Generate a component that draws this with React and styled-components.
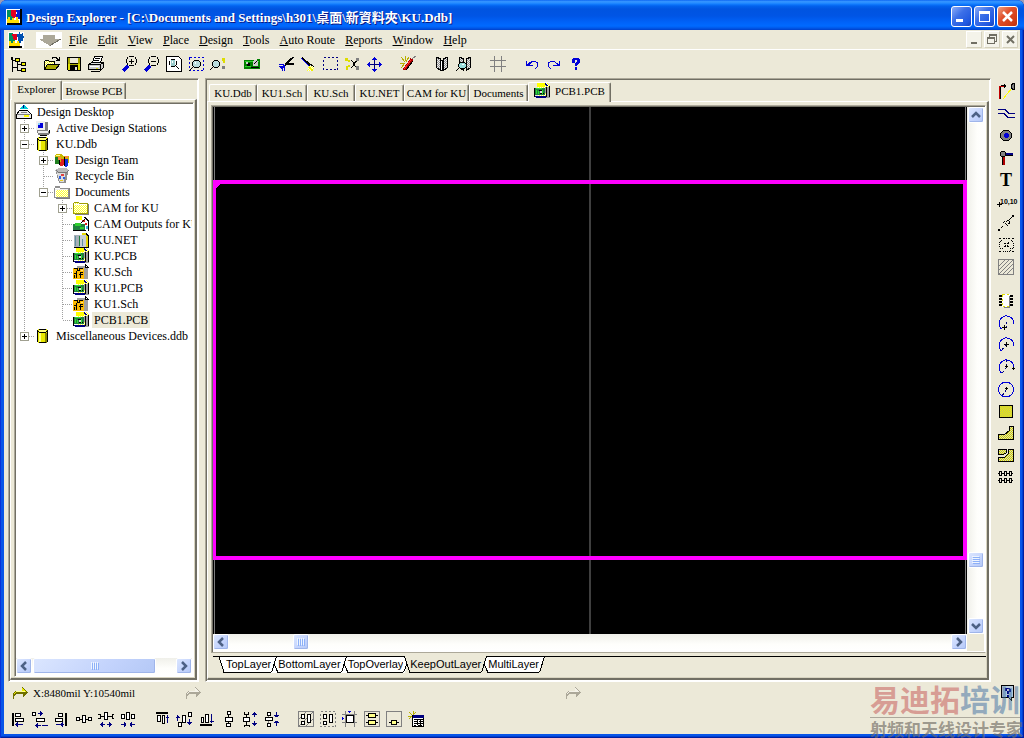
import React from 'react';
import styled, { createGlobalStyle, css } from 'styled-components';

const FACE = '#ece9d8';
const SERIF = '"Liberation Serif", "Noto Sans CJK TC", serif';
const SANS = '"Liberation Sans", "Noto Sans CJK TC", sans-serif';

const Global = createGlobalStyle`
  * { box-sizing: border-box; }
  body { margin: 0; background: #9c9cb4; font: 12px ${SERIF}; color: #000; }
  button { font: inherit; color: inherit; padding: 0; margin: 0; border: 0; background: none; }
  ul { list-style: none; margin: 0; padding: 0; }
`;

/* ---------- icon drawings: [kind, colour, path]
   s = stroke, w = wide stroke, d = dashed, e = dotted, a = smooth arc, f = fill, o = outlined fill ---------- */
const DY = 'url(#ditherYellow)';
const DO = 'url(#ditherOlive)';
const DP = 'url(#ditherPale)';
const DG = 'url(#ditherGray)';
const N = '#000080';
const B = '#0000d8';
const K = '#000';
const G = '#808080';

const pcb = [
  ['f', DY, 'M4 0h9l3 3v12H4z'], ['f', '#ff0', 'M3 0h8v4H3z'], ['f', '#a0a0a0', 'M11 4h5v11h-4z'], ['s', K, 'M12.5 4v10M15.5 3v11'],
  ['f', '#208040', 'M1 5h10v7H1z'], ['f', K, 'M0 5h1v9H0zM5 7h3v1H5zM6 10h4v1H6z'], ['f', '#30e030', 'M2 5h6v1H2zM2 7h1v4H2zM4 8h1v3H4zM8 7h1v4H8z'],
  ['f', N, 'M1 13h11v2H2zM11 0h1v1h1v1h1v1h-2z'], ['f', '#ddd', 'M6 8h2v2H6z'],
];
const sch = [
  ['f', '#a0a0a0', 'M4 2h9l2 2v11H4z'], ['o', '#fff', 'M12.5 .5l3 3h-3z'], ['f', '#fb0', 'M0 4h11v11H0z'],
  ['s', K, 'M1 4.5h3v2h2v-2h4M3.5 7v7M1 9.5h3M7.5 14V8.500h2M6 10.500h4M1.500 11v3'], ['f', '#ffe080', 'M8 6h2v1H8z'],
];
const folder = [
  ['f', G, 'M2 4h14v11H2z'], ['f', '#a0a000', 'M0 3h1V2h5v1h9v11H0z'], ['f', DY, 'M1 3h5v1h8v9H1z'], ['s', '#fff', 'M1 4.500h13'],
];
const barrel = [
  ['f', '#e8e800', 'M2 2l2-1h7l2 1v12l-2 1H4l-2-1z'], ['f', '#888800', 'M10 5h3v8l-2 2h-1z'], ['f', '#ffff80', 'M4 2h7v2H4zM4 5h2v9H4z'],
  ['s', K, 'M4 1.500h7M2.500 2v12M12.500 2v12M4 4.500h7M4 14.500h7M3 3.500h1M11 3.500h1'],
];
const logo = [
  ['f', '#fff', 'M0 0h16v16H0z'], ['f', K, 'M14 0h2v16H1v-2h13z'], ['f', '#009060', 'M1 1h4v5l2 2v3H1z'], ['f', '#e00020', 'M5 1h5v6l-1 2H7L5 6z'],
  ['f', '#0020d0', 'M10 1h4v9h-4V7l1-3z'], ['f', '#ffe000', 'M1 10h1V8h2v3h2V9h2v2h2V8h2v3h1v3H1z'],
];
const ARC = 'M4.500 15A7.500 7.500 0 1 1 17 10';

const ICONS = {
  logo,
  logo2: [...logo.slice(0, 1), ['f', '#009060', 'M1 1h4v5l2 2v3H1z'], ['f', '#e00020', 'M4 2h5v6H6z'], ['f', '#0050b0', 'M9 2h2V0h1v2h2V1h1v3h1v2h-1v3h-2v2h-3V7z'], ['f', '#ffe000', 'M1 9h2v2h2V9h2v2h2V9h2v2h1v3H1z'], ['f', K, 'M1 14h13v2H1z']],
  tree: [['s', K, 'M2.500 1v15M2 4.500h3M2 11.500h5M7.500 5v10M7 8.500h4M7 14.500h4'], ['o', '#ee0', 'M5.500 2.500h4v3h-4zM11.500 6.500h4v3h-4zM11.500 12.500h4v3h-4z'], ['s', K, 'M1.500 1v3']],
  open: [['o', DY, 'M.500 13.500V5.500l1-1h3l1 1h5v3'], ['o', '#a8a800', 'M.500 13.500l3-5h12l-4 5z'], ['s', K, 'M8 2.500l1-1h3l3 3M15.500 1v4M12 4.500h3']],
  save: [['f', K, 'M1 1h14v14H2l-1-1z'], ['f', '#a8a800', 'M2 2h2v6h8V2h2v12H2z'], ['f', FACE, 'M4 2h8v5H4z'], ['f', K, 'M4 9h8v6H4z'], ['f', '#ddd', 'M9 11h2v3H9z'], ['f', '#dd0', 'M2 8h2v6H2zM12 8h2v6h-2z']],
  print: [['o', '#fff', 'M4.500 6.500l2-6h8l-2 6z'], ['s', K, 'M7 2.500h5M6 4.500h5'], ['o', '#ddd', 'M.500 8.500l3-2h12l-3 3H1z'], ['o', '#ccc', 'M.500 8.500h12v5H.500zM12.500 8.500l3-2v5l-3 3z'], ['s', K, 'M3 15.500h9'], ['s', '#fff', 'M2 10.500h9'], ['f', '#dd0', 'M8 12h2v1H8z']],
  zoomin: [['s', K, 'M7 .500h5M7 9.500h5M4.500 3v4M14.500 3v4M5.500 1v2M13.500 1v2M5.500 7v2M13.500 7v2M7 5.500h5M9.500 3v5'], ['w', B, 'M6 10l-5 5']],
  zoomout: [['s', K, 'M7 .500h5M7 9.500h5M4.500 3v4M14.500 3v4M5.500 1v2M13.500 1v2M5.500 7v2M13.500 7v2M7 5.500h5'], ['w', B, 'M6 10l-5 5']],
  zoompage: [['o', '#fff', 'M.500 .500h12l3 3v12h-15z'], ['s', K, 'M5 3.500h4M3.500 5v4M10.500 5v4M5 10.500h4M9.500 9.500l4 4'], ['f', '#9cc', 'M5 4h4v6H5z'], ['s', '#fff', 'M6.500 5v2']],
  zoomarea: [['d', B, 'M1.500 1.500h14v13h-14z'], ['o', '#bdd', 'M6.500 4.500h4l2 2v3l-2 2h-4l-2-2v-3z'], ['s', K, 'M5 11l-4 4'], ['s', '#fff', 'M7.500 6v2']],
  zoompoint: [['o', '#bdd', 'M4.500 4.500h3l2 2v3l-2 2h-3l-2-2v-3z'], ['s', K, 'M3 11l-3 3'], ['f', '#dd0', 'M12 2h3v3h-3zM13 5h2v2h-2z'], ['f', G, 'M12 10h3v3h-3z']],
  board: [['f', '#008000', 'M0 4h13V3h3v10H0z'], ['f', '#30d030', 'M1 5h14v1H1zM1 10h6v1H1z'], ['f', K, 'M3 7h3v3H3zM7 11h8v1H7z'], ['f', '#ccc', 'M2 6h2v2H2zM10 4h3l1 2v4h-5V6z'], ['s', K, 'M10 8l3-3']],
  cut: [['v', K, 'M15.500 1L7 9M16 8H7'], ['s', B, 'M1 8.500h4l2 2M1 10.500h4M6.500 10v5M4.500 11v4M2 12l5-3M3 13l4-3']],
  brush: [['v', K, 'M2 2l8 7'], ['s', '#0000ff', 'M1 2l9 9'], ['s', K, 'M10 8l4 3'], ['f', DY, 'M9 10h3l2 2-1 3H7z'], ['f', '#ee0', 'M9 11h2v2H9zM11 13h2v2h-2z']],
  select: [['d', N, 'M1.500 1.500h14v12h-14z']],
  deselect: [['f', '#dd0', 'M1 2h3v3H1zM4 4h2v2H4zM2 10h2v4H2zM4 9h2v2H4z'], ['s', K, 'M7 4l4 4-4 4M13 5l-4 3 4 4'], ['f', G, 'M12 2h3v3h-3zM12 10h3v4h-3z']],
  move: [['s', N, 'M8.500 1v14M2 8.500h13'], ['f', B, 'M8 1h1l2 3H6zM8 16h1l2-3H6zM1 8v1l3 2V6zM16 8v1l-3 2V6z']],
  wand: [['s', '#b8b000', 'M1 1l4 5M5.500 0v5M0 7.500h5M1 12l4-5M9 1L6 6'], ['w', '#b00000', 'M12 3L4 14'], ['s', '#ff3030', 'M11 4l-7 9'], ['s', G, 'M12 3l4-3'], ['s', K, 'M13 5L6 14']],
  lib: [['o', DG, 'M2.500 1.500l4 1v12l-4-3zM13.500 1.500l-4 1v12l4-3z'], ['o', '#fff', 'M6.500 4.500h3v10h-3z'], ['s', K, 'M8.500 5v9']],
  libfind: [['o', DG, 'M3.500 1.500l4 1v12l-4-3zM14.500 1.500l-4 1v12l4-3z'], ['o', '#9dd', 'M4.500 6.500h4l2 2v2l-2 2h-4l-2-2v-2z'], ['s', K, 'M3 12l-3 3'], ['s', '#fff', 'M6 8.500h2']],
  grid: [['s', G, 'M4.500 0v16M11.500 0v16M0 4.500h16M0 10.500h16']],
  undo: [['f', B, 'M2 5h1v3l5-3h2v1H8L5 9h4v1H2z'], ['s', B, 'M9 5.500h3M12 6.500h2M13.500 7v4M12 11.500h1M11 12.500h1']],
  redo: [['f', B, 'M14 5h-1v3L8 5H6v1h2l3 3H7v1h7z'], ['s', B, 'M7 5.500H4M4 6.500H2M2.500 7v4M4 11.500H3M5 12.500H4']],
  help: [['f', B, 'M4 3h1V2h6v1h1v4h-1v1h-1v1H9v1H7V7h1V6h1V4H7v3H4zM7 11h2v3H7z']],
  desktop: [['f', '#00c8d8', 'M8 0l4 5H4z'], ['s', N, 'M7.500 1v3'], ['o', '#eee', 'M3.500 6.500h8l4 4v4H.500v-4z'], ['s', G, 'M1 10.500h13'], ['f', '#ff0', 'M8 11h5v2H8z'], ['s', G, 'M5 8.500h6']],
  station: [['f', G, 'M3 2h10v9H3zM2 11h12l1 3-3 1H3z'], ['f', '#eee', 'M1 1h9v9H1zM3 11h10v2H3z'], ['f', B, 'M3 3h5v5H3z'], ['f', '#8cf', 'M3 3h2v2H3z'], ['s', G, 'M11.500 2v8M2 10.500h8'], ['s', K, 'M5 15.500h7M14.500 10v3']],
  barrel,
  team: [['f', '#c8b800', 'M1 3l2-1h4l2 2h6v7H1z'], ['f', '#ffff90', 'M2 3h4v1H2z'], ['f', '#208020', 'M1 5h4v7H1z'], ['f', K, 'M5 5h1v8H5zM10 5h1v9h-1z'], ['f', '#e02020', 'M7 7h3v5l-2 2H6z'], ['f', '#1030e0', 'M11 7h3v6l-2 2h-1z'], ['f', '#ff8040', 'M4 5h3v3H4zM11 4h3v2h-3z']],
  bin: [['f', '#909090', 'M2 4h12l-2 11H5z'], ['f', '#ddd', 'M3 5h8l-1 9H6z'], ['f', '#bbb', 'M1 2l4-2h7l3 2-2 3H3z'], ['s', '#777', 'M2 2.500l3 2h7l3-2'], ['f', '#3060e0', 'M5 8h2v3H5zM9 9h2v2H9z'], ['f', '#e04040', 'M7 6h3v2H7z'], ['f', '#e8c820', 'M6 12h3v1H6z']],
  folder,
  folderopen: [['f', G, 'M2 4h14v11H2z'], ['f', '#909090', 'M0 4h1V2h5v2h9v10H0z'], ['f', '#fff', 'M1 4h5v1h8v8H1z'], ['f', DY, 'M2 5h12v8H2z'], ['s', '#eee', 'M1 5.500h13']],
  cam: [['f', '#fff', 'M4 1h8l3 3v11H4z'], ['f', '#ff0', 'M3 0h6v4H3z'], ['f', '#208040', 'M0 8h12v6H0z'], ['f', '#30d030', 'M2 7h6v3H2zM7 11h4v2H7z'], ['f', '#e02020', 'M9 4h3v2H9zM12 7h2v2h-2z'], ['s', K, 'M0 14.500h13M11.500 1l4 4v10M8 7l5-5'], ['f', '#40b0e0', 'M13 10h2v3h-2z']],
  net: [['f', '#e8d800', 'M9 1h4l3 3v11H9z'], ['f', '#a8b0b8', 'M1 3h6v12H1z'], ['f', '#c8ced2', 'M7 3h6v12H7z'], ['s', K, 'M13 1.500l2 2v12M1 15.500h14'], ['s', '#6090a0', 'M2.500 4v10M9.500 7v7'], ['s', '#208040', 'M6.500 4v10']],
  pcb,
  sch,
  arrowOn: [['f', '#707000', 'M0 14V8l2-2h7V2l6 5-5 5V9H4l-3 2v3z'], ['f', '#ee0', 'M1 8l2-2h6V3l5 4H3L1 10z'], ['s', '#ffff90', 'M3 6.500h9']],
  arrowOff: [['f', '#aca899', 'M0 14V8l2-2h7V2l6 5-5 5V9H4l-3 2v3z'], ['f', '#f4f2e8', 'M1 8l2-2h6V3l5 4H3L1 10z']],
  aLeft: [['s', K, 'M2.500 2v13M3.500 2v13'], ['o', '#fff', 'M5.500 2.500h5v3h-5zM5.500 7.500h8v3h-8z'], ['s', N, 'M5 13.500h8M7.500 11v5M6.500 12v3']],
  aHc: [['o', '#fff', 'M.500 1.500h3v3h-3zM4.500 7.500h8v3h-8z'], ['s', N, 'M6 2.500h5M8.500 0v5M9.500 1v3M10 14.500h6M4 14.500h5M3.500 14v1M4.500 13v3M5.500 12v5']],
  aRight: [['s', K, 'M12.500 2v13M11.500 2v13'], ['o', '#fff', 'M4.500 2.500h4v3h-4zM1.500 7.500h7v3h-7z'], ['s', N, 'M2 13.500h8M8.500 11v5M7.500 12v3']],
  dH: [['s', K, 'M4 8.500h2M10 8.500h2'], ['o', '#fff', 'M.500 6.500h3v3h-3zM6.500 4.500h3v7h-3zM12.500 6.500h3v3h-3z']],
  dHi: [['s', K, 'M0 3.500h2v4H0M2 5.500h4M10 5.500h4M16 3.500h-2v4h2'], ['o', '#fff', 'M6.500 1.500h3v7h-3z'], ['s', N, 'M2 13.500h5M9 13.500h5M3.500 12v3M4.500 11v5M12.500 12v3M11.500 11v5']],
  dHd: [['o', '#fff', 'M1.500 3.500h3v4h-3zM6.500 1.500h3v7h-3zM11.500 3.500h3v4h-3z'], ['s', N, 'M1 13.500h5M10 13.500h5M4.500 11v5M5.500 12v3M11.500 11v5M10.500 12v3']],
  aTop: [['s', K, 'M2 1.500h12M2 2.500h12'], ['o', '#fff', 'M3.500 4.500h3v6h-3zM8.500 4.500h2v8h-2z'], ['s', N, 'M13.500 4v8M12 6.500h3']],
  aVc: [['o', '#fff', 'M6.500 4.500h3v7h-3zM2.500 11.500h3v4h-3zM12.500 1.500h3v4h-3z'], ['s', N, 'M1.500 4v6M0 6.500h4M1 5.500h2M13.500 8v6M11 11.500h5M12 12.500h3']],
  aBot: [['s', K, 'M2 13.500h12M2 14.500h12'], ['o', '#fff', 'M3.500 6.500h2v5h-2zM7.500 3.500h3v8h-3z'], ['s', N, 'M13.500 3v9M12 10.500h4']],
  dV: [['s', K, 'M8.500 4v9'], ['o', '#fff', 'M7.500 .500h3v3h-3zM5.500 6.500h7v4h-7zM6.500 12.500h4v3h-4z']],
  dVi: [['s', K, 'M2 1v2h4V1M4.500 3v4M4.500 10v4M2 16v-2h5v2'], ['o', '#fff', 'M1.500 6.500h6v4h-6z'], ['s', N, 'M12.500 1v5M12.500 10v5M10 3.500h5M11 2.500h3M10 12.500h5M11 13.500h3']],
  dVd: [['s', G, 'M4.500 4v9'], ['o', '#fff', 'M3.500 1.500h3v3h-3zM1.500 6.500h7v3h-7zM3.500 12.500h3v3h-3z'], ['s', N, 'M12.500 1v5M12.500 10v5M10 4.500h5M11 5.500h3M10 11.500h5M11 10.500h3']],
  g1: [['s', G, 'M.500 .500h15v15h-15zM1 8l7-7M1 15L15 1M8 15l7-7'], ['o', '#fff', 'M3.500 3.500h3v4h-3zM3.500 10.500h3v3h-3zM9.500 3.500h3v8h-3z']],
  g2: [['d', G, 'M.500 .500h15v15h-15z'], ['o', '#fff', 'M3.500 3.500h3v4h-3zM3.500 10.500h3v3h-3zM9.500 3.500h3v8h-3z']],
  g3: [['s', G, 'M3.500 0v16M12.500 0v16M0 3.500h15M0 11.500h15'], ['o', '#fff', 'M4.500 4.500h7v7h-7z'], ['f', B, 'M6 0h3v1H8v1H7V1H6zM0 6h1v1h1v1H1v1H0z']],
  g4: [['o', FACE, 'M.500 .500h15v15h-15z', G], ['s', K, 'M2 4.500h12M2 11.500h12'], ['o', '#ff8', 'M4.500 2.500h7v4h-7zM4.500 9.500h7v4h-7z']],
  g5: [['s', G, 'M.500 .500h15v15h-15z'], ['s', K, 'M3 11.500h10'], ['o', '#ff8', 'M5.500 9.500h5v4h-5z']],
  g6: [['s', '#b8b000', 'M1 1l6 6M5.500 0v5M0 5.500h5M8 1L1 8'], ['o', '#fff', 'M4.500 4.500h11v11h-11z'], ['f', N, 'M5 4h11v3H5z'], ['s', K, 'M6 8.500h9M6 10.500h3M11 10.500h4M6 12.500h9M6 14.500h2M10 14.500h4M9.500 8v6M12.500 8v6']],
  note: [['o', '#bcd', 'M1.500 .500h12v12h-2v3l-3-3h-7z'], ['f', N, 'M5 3h5v1h1v3H9v2H7V6h2V4H7v2H5zM7 10h2v2H7z']],
};

const RIGHT = [
  [['s', K, 'M3.500 4v13M4 3.500h3M7.500 2v4M8.500 3v2'], ['s', '#c00000', 'M2.500 4v13M3 4.500h4'], ['s', '#ff0', 'M6 17L15 6'], ['o', G, 'M17.500 1.500h-2l-1 2v2l1 2h2z']],
  [['s', N, 'M1 5.500h7l4 4h6M1 9.500h6l4 4h7']],
  [['o', G, 'M6.500 4.500h5l3 3v4l-3 3h-5l-3-3v-4z'], ['f', B, 'M8 7h3v1h1v3h-1v1H8v-1H7V8h1z']],
  [['f', N, 'M8 5h8v2H8z'], ['s', K, 'M8 7.500h8M5.500 8v9'], ['f', '#b00000', 'M6 9h2v8H6z'], ['o', G, 'M4.500 3.500h3l1 1v3l-1 1h-3l-1-1v-3z']],
  'T', '10',
  [['s', K, 'M2 15.500h1M4 13.500h1M5 12.500h1M13 4.500h1M12 5.500h1M14 3.500h1M7.500 7v1M6 8.500h1M8 9.500h1M9 10.500h1M10 11.500h1M10 6.500h2M9.500 7v1M12.500 7v2M11 9.500h2'], ['f', K, 'M1 15h2v2H1zM15 1h2v2h-2z']],
  [['e', K, 'M6.500 2.500h6l4 4v5l-4 4h-6l-4-4v-5z'], ['s', K, 'M2 2.500h2M15 2.500h2M2 15.500h2M15 15.500h2'], ['d', K, 'M4 4l11 10M15 4L4 14']],
  [['s', G, 'M1.500 1.500h15v15h-15zM2 8l6-6M2 12L12 2M2 16L16 2M6 16l10-10M10 16l6-6']],
  null,
  [['f', K, 'M2 3h3v2H2zM2 6h3v2H2zM2 9h3v2H2zM2 12h3v2H2zM13 3h3v2h-3zM13 6h3v2h-3zM13 9h3v2h-3zM13 12h3v2h-3z'], ['f', '#fff', 'M5 2h8v13H5z'], ['d', '#e0e000', 'M5.500 2.500h7v12h-7z'], ['s', G, 'M7 15.500h6M12.500 4v11']],
  [['s', B, ARC], ['d', N, 'M9.500 8v5'], ['s', K, 'M5 13.500h5M7.500 11v5']],
  [['s', B, ARC], ['d', N, 'M9 9l-5 6'], ['s', K, 'M7 8.500h5M9.500 6v5']],
  [['s', B, ARC], ['d', N, 'M9.500 2v7l-5 7'], ['s', K, 'M8 8.500h3M9.500 7v3M15 10.500h3M16.500 9v3']],
  [['s', B, 'M1.500 9.500a7.500 7.500 0 1 0 15 0a7.500 7.500 0 1 0-15 0'], ['d', N, 'M9 10l-4 6'], ['s', K, 'M8 8.500h3M9.500 7v3']],
  [['o', DO, 'M2.500 3.500h13v12h-13z']],
  [['o', DP, 'M1.500 15.500v-5h6l5-4v-4h4v13z']],
  [['o', DP, 'M1.500 3.500h8v3l-3 2h-5zM1.500 15.500v-4h6l4-4v-4h5v12z']],
  [['s', K, 'M1 5.500h15M1 12.500h15'], ['o', FACE, 'M2.500 3.500h2v4h-2zM7.500 3.500h2v4h-2zM12.500 3.500h2v4h-2zM2.500 10.500h2v4h-2zM7.500 10.500h2v4h-2zM12.500 10.500h2v4h-2z']],
];

const drawPart = ([kind, colour, d, edge], i) => {
  const p = { d, fill: 'none' };
  if (kind === 'f') return <path key={i} {...p} fill={colour} />;
  if (kind === 'o') return <path key={i} {...p} fill={colour} stroke={edge || K} />;
  if (kind === 'w') return <path key={i} {...p} stroke={colour} strokeWidth="3" />;
  if (kind === 'v') return <path key={i} {...p} stroke={colour} strokeWidth="2" />;
  if (kind === 'd') return <path key={i} {...p} stroke={colour} strokeDasharray="2 2" />;
  if (kind === 'e') return <path key={i} {...p} stroke={colour} strokeDasharray="1 1" />;
  return <path key={i} {...p} stroke={colour} />;
};

const Svg = styled.svg`
  display: block;
  flex: none;
  overflow: visible;
  shape-rendering: crispEdges;
`;
const Icon = ({ name, parts, size = 16 }) => (
  <Svg width={size} height={size} viewBox={`0 0 ${size} ${size}`} aria-hidden="true">
    {(parts || ICONS[name]).map(drawPart)}
  </Svg>
);

const Patterns = styled.svg`
  position: absolute;
  width: 0;
  height: 0;
`;
const Dither = ({ id, a, b }) => (
  <pattern id={id} width="2" height="2" patternUnits="userSpaceOnUse">
    <rect width="2" height="2" fill={a} />
    <path d="M0 0h1v1H0zM1 1h1v1H1z" fill={b} />
  </pattern>
);

/* ---------- frame ---------- */
const Frame = styled.div`
  position: relative;
  display: flex;
  flex-direction: column;
  min-height: 100vh;
  padding: 0 4px 4px;
  border-radius: 7px 7px 0 0;
  background: #0855e8;
  box-shadow: inset 1px 0 #0831d9, inset -1px -1px #001ea0, inset -2px -2px #0040d0;
  overflow: hidden;
`;
const TitleBar = styled.header`
  display: flex;
  align-items: center;
  gap: 4px;
  height: 30px;
  margin: 0 -4px;
  padding: 3px 6px 0;
  color: #fff;
  font-size: 13px;
  font-weight: bold;
  text-shadow: 1px 1px #0a1883;
  background: linear-gradient(#0058ee 0, #3593ff 1px, #288eff 3px, #127dff 4px, #0262ee 6px, #0054e0 9px, #0055e5 16px, #0062f8 22px, #006aff 26px, #0059ea 28px, #0040ca 30px);
`;
const Title = styled.h1`
  flex: 1;
  margin: 0;
  font-size: inherit;
  white-space: nowrap;
`;
const CaptionButtons = styled.div`
  display: flex;
  gap: 2px;
`;
const CaptionButton = styled.button`
  width: 21px;
  height: 21px;
  border: 1px solid #fff;
  border-radius: 3px;
  background: ${(p) => (p.$close
    ? 'linear-gradient(135deg, #f0a080, #e0502c 40%, #d03c14 80%, #b83010)'
    : 'linear-gradient(135deg, #8cacf8, #3c70e8 40%, #2058e0 80%, #1840b8)')};
`;
const MenuBar = styled.nav`
  display: flex;
  align-items: center;
  height: 20px;
  padding: 0 2px 0 4px;
  background: ${FACE};
  border-bottom: 1px solid #fff;
`;
const MenuArrow = styled.span`
  margin: 0 2px 0 12px;
  background: #fff;
`;
const MenuItems = styled.div`
  display: flex;
  flex: 1;
  gap: 10px;
  padding-left: 5px;
`;
const MenuItem = styled.button`
  line-height: 16px;
  white-space: nowrap;
  &::first-letter { text-decoration: underline; }
`;
const MdiButtons = styled.div`
  display: flex;
  gap: 2px;
`;
const MdiButton = styled.button`
  width: 16px;
  height: 17px;
  background: #f4f3ea;
  border: 1px solid;
  border-color: #fff #d4d0bc #d4d0bc #fff;
`;
const ToolBar = styled.div`
  display: flex;
  align-items: center;
  height: ${(p) => p.$height}px;
  padding-left: 3px;
  background: ${FACE};
`;
const ToolButton = styled.button`
  display: flex;
  align-items: center;
  justify-content: center;
  width: 22px;
  height: 22px;
`;
const Gap = styled.span`
  width: 12px;
  height: 12px;
`;

/* ---------- work area ---------- */
const Work = styled.div`
  display: flex;
  flex: 1;
  gap: 6px;
  padding-left: 4px;
  background: ${FACE};
`;
const sunken = css`
  border: 1px solid;
  border-color: #aca899 #fff #fff #aca899;
  box-shadow: inset 1px 1px #716f64, inset -1px -1px #fff;
  padding: 1px;
`;
const Panel = styled.section`
  ${sunken}
  display: flex;
  flex-direction: column;
  min-width: 0;
  ${(p) => (p.$side ? 'width: 191px; flex: none;' : 'flex: 1; margin-right: -6px;')}
`;
const Tabs = styled.div`
  display: flex;
  align-items: flex-end;
  height: ${(p) => p.$height}px;
  padding-left: ${(p) => p.$inset}px;
  font-size: 11px;
`;
const Tab = styled.button`
  position: relative;
  display: flex;
  align-items: center;
  justify-content: center;
  gap: 5px;
  width: ${(p) => p.$width}px;
  height: ${(p) => (p.$active ? 20 : 17)}px;
  padding-bottom: ${(p) => (p.$active ? 3 : 0)}px;
  margin-bottom: ${(p) => (p.$active ? -1 : 0)}px;
  white-space: nowrap;
  background: ${FACE};
  border: 1px solid;
  border-color: #fff #716f64 transparent #fff;
  border-bottom: 0;
  border-radius: 2px 2px 0 0;
  box-shadow: inset -1px 0 #aca899;
`;
const Page = styled.div`
  display: flex;
  flex: 1;
  flex-direction: column;
  min-height: 0;
  padding: ${(p) => p.$pad};
  border: solid;
  border-width: 1px 2px 2px 1px;
  border-color: #fff #716f64 #716f64 #fff;
  box-shadow: inset -1px -1px #d8d4c0;
`;
const TreeBox = styled.div`
  ${sunken}
  display: flex;
  flex: 1;
  flex-direction: column;
  background: #fff;
`;
const Tree = styled.ul`
  flex: 1;
  overflow: hidden;
`;
const TreeRow = styled.li`
  display: flex;
  height: 16px;
  line-height: 16px;
  white-space: nowrap;
`;
const dots = (dir) => `repeating-linear-gradient(${dir}, #a0a0a0 0 1px, #fff 1px 2px)`;
const Guide = styled.span`
  display: flex;
  flex: none;
  width: 19px;
  padding: 4px 0 0 4px;
  background-repeat: no-repeat;
  background-image: ${dots('180deg')}, ${dots('90deg')};
  background-position: 8px 0, 9px 8px;
  background-size: 1px ${(p) => ({ full: '16px', tee: '16px', end: '8px', none: '0' })[p.$kind]}, ${(p) => (p.$kind === 'tee' || p.$kind === 'end' ? '10px 1px' : '0 0')};
`;
const Expander = styled.button`
  position: relative;
  width: 9px;
  height: 9px;
  background: #fff;
  border: 1px solid #a0a090;
  &::before, &::after { content: ''; position: absolute; background: #000; }
  &::before { left: 1px; top: 3px; width: 5px; height: 1px; }
  &::after { left: 3px; top: 1px; width: 1px; height: ${(p) => (p.$open ? 0 : 5)}px; }
`;
const NodeLabel = styled.span`
  margin-left: 3px;
  padding: 0 2px;
  background: ${(p) => (p.$selected ? FACE : 'transparent')};
`;

/* ---------- scroll bars ---------- */
const Bar = styled.div`
  display: flex;
  flex: none;
  flex-direction: ${(p) => (p.$vertical ? 'column' : 'row')};
  ${(p) => (p.$vertical ? 'width: 17px;' : 'height: 17px;')}
  padding: ${(p) => (p.$vertical ? '0 0 0 1px' : '0 0 1px')};
  background: linear-gradient(${(p) => (p.$vertical ? '90deg' : '180deg')}, #f0f0ea, #fefefb 60%, #fff);
`;
const piece = css`
  display: flex;
  align-items: center;
  justify-content: center;
  border: 1px solid #fff;
  border-radius: 2px;
  background: linear-gradient(135deg, #dbe6ff, #c3d3fc 60%, #b4c8f6);
  box-shadow: inset -1px -1px #9fb5ea;
`;
const BarButton = styled.button`
  ${piece}
  width: 16px;
  height: 16px;
`;
const Thumb = styled.div`
  ${piece}
  flex: ${(p) => p.$grow || 'none'};
  min-width: 16px;
  min-height: 16px;
`;
const Space = styled.span`
  flex: ${(p) => p.$grow};
`;
const ARROWS = { left: 'M10 4L6 8l4 4', right: 'M6 4l4 4-4 4', up: 'M4 10l4-4 4 4', down: 'M4 6l4 4 4-4' };
const Arrow = ({ dir }) => (
  <svg width="14" height="14" viewBox="1 1 14 14" aria-hidden="true">
    <path d={ARROWS[dir]} fill="none" stroke="#4d6185" strokeWidth="2.500" />
  </svg>
);
const Grip = ({ vertical }) => (
  <Svg width="8" height="8" viewBox="0 0 8 8" aria-hidden="true">
    <path d={vertical ? 'M0 .500h7M0 2.500h7M0 4.500h7M0 6.500h7' : 'M.500 0v7M2.500 0v7M4.500 0v7M6.500 0v7'} stroke="#eef4fe" />
    <path d={vertical ? 'M1 1.500h7M1 3.500h7M1 5.500h7M1 7.500h7' : 'M1.500 1v7M3.500 1v7M5.500 1v7M7.500 1v7'} stroke="#8cb0f8" />
  </Svg>
);
const ScrollBar = ({ vertical, before, after, grow }) => (
  <Bar $vertical={vertical}>
    <BarButton aria-label={vertical ? 'Scroll up' : 'Scroll left'}><Arrow dir={vertical ? 'up' : 'left'} /></BarButton>
    <Space $grow={before} />
    <Thumb $grow={grow}><Grip vertical={vertical} /></Thumb>
    <Space $grow={after} />
    <BarButton aria-label={vertical ? 'Scroll down' : 'Scroll right'}><Arrow dir={vertical ? 'down' : 'right'} /></BarButton>
  </Bar>
);

/* ---------- editor ---------- */
const Editor = styled.div`
  ${sunken}
  display: grid;
  flex: 1;
  grid-template: minmax(300px, 1fr) 17px / 1fr 17px;
  border-bottom-color: #aca899;
`;
const Board = styled.div`
  position: relative;
  background: #000;
  svg { position: absolute; width: 100%; height: 100%; shape-rendering: crispEdges; }
`;
const Layers = styled.div`
  display: flex;
  height: 18px;
  margin: 3px 0 0 2px;
  font: 11px/15px ${SANS};
`;
const LayerTab = styled.button`
  height: 17px;
  border: solid #000;
  border-width: ${(p) => (p.$active ? 0 : 1)}px 0 1px;
  padding: ${(p) => (p.$active ? 1 : 0)}px 0 0;
  background: ${(p) => (p.$active ? FACE : '#fff')};
`;
const LayerLine = styled.span`
  flex: ${(p) => (p.$lead ? '0 0 6px' : 1)};
  border-top: 1px solid #000;
`;
const JOINS = {
  first: ['M0 0h7v16H5z', 'M0 .500L5 16.500h2', 'M0 .500h7'],
  plain: ['M0 0h8v17H0z', 'M5.500 .500L.500 16.500M3 8l4 8.500', 'M0 .500h8'],
  intoActive: ['M0 0h1l3 9-2 8H0z', 'M1.500 .500L7 16.500M4 8L.500 16.500', 'M0 .500h2'],
  fromActive: ['M5 0h3v17H7L4 8z', 'M5.500 .500L.500 16.500M3 8l4 8.500', 'M5 .500h3'],
  last: ['M0 0h5L0 16z', 'M5.500 .500L.500 16.500', 'M0 .500h7'],
};
const Join = ({ kind }) => (
  <Svg width="7" height="17" viewBox="0 0 7 17" aria-hidden="true">
    <path d={JOINS[kind][0]} fill="#fff" />
    <path d={`${JOINS[kind][1]}${JOINS[kind][2]}`} fill="none" stroke="#000" />
  </Svg>
);
const SideTools = styled.aside`
  display: flex;
  flex: none;
  flex-direction: column;
  align-items: center;
  width: 29px;
  padding-top: 2px;
`;

/* ---------- footer ---------- */
const Status = styled.div`
  display: flex;
  align-items: center;
  height: 22px;
  padding: 0 4px 0 9px;
  font-size: 11px;
  background: ${FACE};
`;
const StatusCell = styled.span`
  display: flex;
  align-items: center;
  gap: 4px;
  flex: ${(p) => p.$basis};
`;
const Watermark = styled.div`
  position: absolute;
  right: 4px;
  bottom: 0;
  width: 150px;
  font-family: "Noto Sans CJK SC", sans-serif;
  font-weight: bold;
  white-space: nowrap;
  pointer-events: none;
`;
const MarkBig = styled.div`
  padding-bottom: 6px;
  margin-bottom: 2px;
  font-size: 30px;
  line-height: 26px;
  color: rgba(192, 72, 72, 0.480);
  border-bottom: 1px solid #aca89c;
  span { color: rgba(60, 108, 160, 0.500); }
`;
const MarkSmall = styled.div`
  font-size: 17px;
  line-height: 18px;
  color: rgba(110, 106, 98, 0.650);
`;

const MENU = ['File', 'Edit', 'View', 'Place', 'Design', 'Tools', 'Auto Route', 'Reports', 'Window', 'Help'];
const TOP_TOOLS = ['tree', null, 'open', 'save', 'print', null, 'zoomin', 'zoomout', 'zoompage', 'zoomarea', 'zoompoint', null, 'board', null, 'cut', 'brush', 'select', 'deselect', 'move', null, 'wand', null, 'lib', 'libfind', null, 'grid', null, 'undo', 'redo', 'help'];
const BOTTOM_TOOLS = ['aLeft', 'aHc', 'aRight', 'dH', 'dHi', 'dHd', null, 'aTop', 'aVc', 'aBot', 'dV', 'dVi', 'dVd', null, 'g1', 'g2', 'g3', 'g4', 'g5', 'g6'];
const TREE = [
  ['Design Desktop', 'desktop', []],
  ['Active Design Stations', 'station', ['tee'], 'closed'],
  ['KU.Ddb', 'barrel', ['tee'], 'open'],
  ['Design Team', 'team', ['full', 'tee'], 'closed'],
  ['Recycle Bin', 'bin', ['full', 'tee']],
  ['Documents', 'folderopen', ['full', 'end'], 'open'],
  ['CAM for KU', 'folder', ['full', 'none', 'tee'], 'closed'],
  ['CAM Outputs for KU', 'cam', ['full', 'none', 'tee']],
  ['KU.NET', 'net', ['full', 'none', 'tee']],
  ['KU.PCB', 'pcb', ['full', 'none', 'tee']],
  ['KU.Sch', 'sch', ['full', 'none', 'tee']],
  ['KU1.PCB', 'pcb', ['full', 'none', 'tee']],
  ['KU1.Sch', 'sch', ['full', 'none', 'tee']],
  ['PCB1.PCB', 'pcb', ['full', 'none', 'end']],
  ['Miscellaneous Devices.ddb', 'barrel', ['end'], 'closed'],
];
const DOCS = [['KU.Ddb', 48], ['KU1.Sch', 50], ['KU.Sch', 48], ['KU.NET', 49], ['CAM for KU', 65], ['Documents', 59]];

const Tools = ({ items }) => items.map((n, i) => (
  n ? <ToolButton key={i} aria-label={n}><Icon name={n} /></ToolButton> : <Gap key={i} />
));

const SideIcon = ({ parts }) => {
  if (parts === 'T') {
    return <Svg width="18" height="18" viewBox="0 0 18 18"><text x="9" y="16" textAnchor="middle" fontSize="18" fontWeight="bold" fontFamily="Liberation Serif, serif">T</text></Svg>;
  }
  if (parts === '10') {
    return (
      <Svg width="18" height="18" viewBox="0 0 18 18">
        <path d="M0 12.500h5M2.500 10v5" stroke="#000" />
        <text x="3" y="12" fontSize="7" fontWeight="bold" fontFamily="Liberation Sans, sans-serif">10,10</text>
      </Svg>
    );
  }
  return <Icon parts={parts} size={18} />;
};

export default function App() {
  return (
    <Frame>
      <Global />
      <Patterns aria-hidden="true">
        <defs>
          <Dither id="ditherYellow" a="#ffff30" b="#fffff0" />
          <Dither id="ditherOlive" a="#f0f000" b="#c0c060" />
          <Dither id="ditherPale" a="#d0d000" b="#dcdcb8" />
          <Dither id="ditherGray" a="#909090" b="#e8e8e8" />
        </defs>
      </Patterns>
      <TitleBar>
        <Icon name="logo" />
        <Title>Design Explorer - [C:\Documents and Settings\h301\桌面\新資料夾\KU.Ddb]</Title>
        <CaptionButtons>
          <CaptionButton aria-label="Minimize"><Svg width="19" height="19"><path d="M4 12h7v3H4z" fill="#fff" /></Svg></CaptionButton>
          <CaptionButton aria-label="Maximize"><Svg width="19" height="19"><path d="M4 4h11v11H4zM5 7v7h9V7z" fill="#fff" fillRule="evenodd" /></Svg></CaptionButton>
          <CaptionButton $close aria-label="Close"><svg width="19" height="19" display="block"><path d="M5 5l9 9M14 5l-9 9" stroke="#fff" strokeWidth="2.500" /></svg></CaptionButton>
        </CaptionButtons>
      </TitleBar>
      <MenuBar>
        <Icon name="logo2" />
        <MenuArrow>
          <Svg width="26" height="16" viewBox="0 0 26 16" aria-hidden="true"><path d="M7 3h12v4h6L14 14 3 7h4z" fill="#aca899" /><path d="M25 7L14 13.500" stroke="#716f64" /></Svg>
        </MenuArrow>
        <MenuItems>{MENU.map((m) => <MenuItem key={m}>{m}</MenuItem>)}</MenuItems>
        <MdiButtons>
          <MdiButton aria-label="Minimize document"><Svg width="14" height="15"><path d="M4 10h6v2H4z" fill="#716f64" /></Svg></MdiButton>
          <MdiButton aria-label="Restore document"><Svg width="14" height="15"><path d="M4.500 5V3.500h7v6H10M2.500 6.500h7v5h-7zM4 2.500h8M2 5.500h8" fill="none" stroke="#716f64" /></Svg></MdiButton>
          <MdiButton aria-label="Close document"><svg width="14" height="15" display="block"><path d="M4 4l7 7M11 4l-7 7" stroke="#716f64" strokeWidth="2" /></svg></MdiButton>
        </MdiButtons>
      </MenuBar>
      <ToolBar $height={28}><Tools items={TOP_TOOLS} /></ToolBar>

      <Work>
        <Panel $side>
          <Tabs $height={19} $inset={1}>
            <Tab $active $width={51}>Explorer</Tab>
            <Tab $width={64}>Browse PCB</Tab>
          </Tabs>
          <Page $pad="2px 1px 1px 3px">
            <TreeBox>
              <Tree>
                {TREE.map(([label, icon, guides, state], i) => (
                  <TreeRow key={i}>
                    {guides.map((g, k) => (
                      <Guide key={k} $kind={g}>
                        {state && k === guides.length - 1 && <Expander $open={state === 'open'} aria-label={label} />}
                      </Guide>
                    ))}
                    <Icon name={icon} />
                    <NodeLabel $selected={label === 'PCB1.PCB'}>{label}</NodeLabel>
                  </TreeRow>
                ))}
              </Tree>
              <ScrollBar before={1} grow={122} after={20} />
            </TreeBox>
          </Page>
        </Panel>

        <Panel>
          <Tabs $height={21} $inset={2}>
            {DOCS.map(([d, w]) => <Tab key={d} $width={w}>{d}</Tab>)}
            <Tab $active $width={83}><Icon name="pcb" />PCB1.PCB</Tab>
          </Tabs>
          <Page $pad="3px 1px 4px 3px">
            <Editor>
              <Board>
                <svg viewBox="0 0 755 527" preserveAspectRatio="none" aria-label="Board">
                  <path d="M1.500 0v527M377.500 0v527M753.500 0v527" stroke="#808080" />
                  <path d="M1 75h752v376H1z" fill="none" stroke="#f0f" strokeWidth="4" />
                  <path d="M0 73h9v3l-7 7H0z" fill="#f0f" />
                </svg>
              </Board>
              <ScrollBar vertical before={428} after={50} />
              <ScrollBar before={64} after={642} />
            </Editor>
            <Layers>
              <LayerLine $lead />
              <Join kind="first" />
              <LayerTab>TopLayer</LayerTab>
              <Join kind="plain" />
              <LayerTab>BottomLayer</LayerTab>
              <Join kind="plain" />
              <LayerTab>TopOverlay</LayerTab>
              <Join kind="intoActive" />
              <LayerTab $active>KeepOutLayer</LayerTab>
              <Join kind="fromActive" />
              <LayerTab>MultiLayer</LayerTab>
              <Join kind="last" />
              <LayerLine />
            </Layers>
          </Page>
        </Panel>

        <SideTools>
          {RIGHT.map((parts, i) => (parts
            ? <ToolButton key={i} aria-label={`Placement tool ${i + 1}`}><SideIcon parts={parts} /></ToolButton>
            : <Gap key={i} />))}
        </SideTools>
      </Work>

      <Status>
        <StatusCell $basis="0 0 173px"><Icon name="arrowOn" />X:8480mil Y:10540mil</StatusCell>
        <StatusCell $basis="0 0 380px"><Icon name="arrowOff" /></StatusCell>
        <StatusCell $basis="1"><Icon name="arrowOff" /></StatusCell>
        <Icon name="note" />
      </Status>
      <ToolBar $height={30}><Tools items={BOTTOM_TOOLS} /></ToolBar>
      <Watermark>
        <MarkBig>易迪拓<span>培训</span></MarkBig>
        <MarkSmall>射频和天线设计专家</MarkSmall>
      </Watermark>
    </Frame>
  );
}
